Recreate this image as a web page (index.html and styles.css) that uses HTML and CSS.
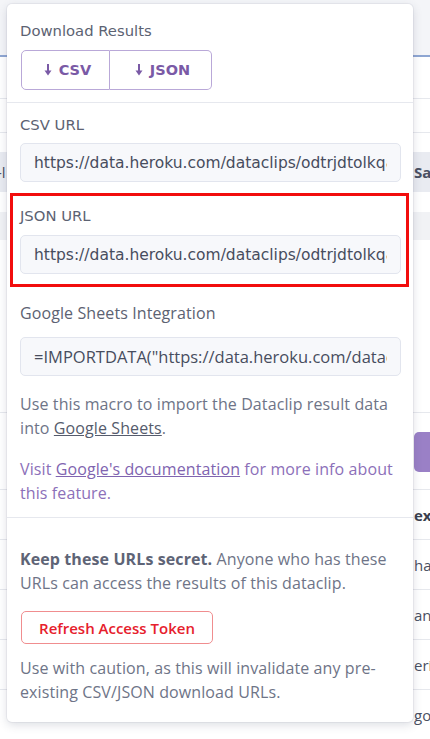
FILE: index.html
```html
<!DOCTYPE html>
<html>
<head>
<meta charset="utf-8">
<link rel="stylesheet" href="styles.css">
</head>
<body>
<div class="page">
  <div class="bg-top"></div>
  <div class="bg-blue"></div>
  <div class="bg-row bg-h41"></div>
  <div class="bg-row bg-h34"></div>
  <div class="bg-row bg-h20 noline"></div>
  <div class="bg-head"><span class="left-txt">-l</span><span class="right-txt bold">Sa</span></div>
  <div class="bg-gap"></div>
  <div class="bg-sub"></div>
  <div class="bg-row bg-h173"></div>
  <div class="bg-btnrow"><span class="purple-btn"></span></div>
  <div class="bg-trow"><span class="right-txt bold dark">ex</span></div>
  <div class="bg-trow"><span class="right-txt">ha</span></div>
  <div class="bg-trow"><span class="right-txt">an</span></div>
  <div class="bg-trow"><span class="right-txt">eri</span></div>
  <div class="bg-trow"><span class="right-txt">gol</span></div>
</div>

<div class="popover">
  <div class="block first">
    <div class="heading">Download Results</div>
    <div class="btn-group">
      <button class="dl-btn"><svg class="arrow" viewBox="0 0 8 12" width="8" height="12"><path d="M4 0v7" stroke="currentColor" stroke-width="2"/><path d="M0.5 6.5h7L4 11.5z" fill="currentColor"/></svg>CSV</button>
      <button class="dl-btn"><svg class="arrow" viewBox="0 0 8 12" width="8" height="12"><path d="M4 0v7" stroke="currentColor" stroke-width="2"/><path d="M0.5 6.5h7L4 11.5z" fill="currentColor"/></svg>JSON</button>
    </div>
  </div>
  <div class="divider"></div>
  <div class="block">
    <div class="field f-csv">
      <div class="heading">CSV URL</div>
      <div class="input"><span class="val">https://data.heroku.com/dataclips/odtrjdtolkqaqvgzlqwuvqbkfhxh.csv?access-token=abc</span></div>
    </div>
    <div class="field highlight">
      <div class="heading">JSON URL</div>
      <div class="input"><span class="val">https://data.heroku.com/dataclips/odtrjdtolkqaqvgzlqwuvqbkfhxh.json?access-token=abc</span></div>
    </div>
    <div class="field f-sheets">
      <div class="label">Google Sheets Integration</div>
      <div class="input body-font"><span class="val">=IMPORTDATA("https://data.heroku.com/dataclips/odtrjdtolkq.csv")</span></div>
    </div>
    <p class="text">Use this macro to import the Dataclip result data into <a class="ulink">Google Sheets</a>.</p>
    <p class="text purple">Visit <a class="ulink plink">Google's documentation</a> for more info about this feature.</p>
  </div>
  <div class="divider"></div>
  <div class="block last">
    <p class="text"><strong>Keep these URLs secret.</strong> Anyone who has these URLs can access the results of this dataclip.</p>
    <button class="danger-btn">Refresh Access Token</button>
    <p class="text">Use with caution, as this will invalidate any pre-existing CSV/JSON download URLs.</p>
  </div>
</div>
</body>
</html>
```

FILE: styles.css
```css
* { box-sizing: border-box; }
html, body { margin: 0; padding: 0; }
body {
  width: 430px;
  height: 739px;
  overflow: hidden;
  position: relative;
  background: #ffffff;
  font-family: "Open Sans", "Liberation Sans", sans-serif;
}

/* background page */
.page { display: flex; flex-direction: column; }
.bg-top { height: 55px; background: #f4f5f8; }
.bg-blue { height: 2px; background: #8ea6d2; }
.bg-row { border-bottom: 1px solid #e6e8ed; }
.bg-h41 { height: 42px; }
.bg-h34 { height: 34px; }
.bg-h20 { height: 19px; }
.noline { border-bottom: none; }
.bg-head {
  height: 40px;
  background: #e9ebf1;
  display: flex;
  align-items: center;
  justify-content: space-between;
  font-size: 15px;
  color: #4a5062;
}
.bg-gap { height: 20px; }
.bg-sub { height: 28px; background: #f1f2f5; }
.bg-h173 { height: 173px; }
.bg-btnrow { height: 77px; border-bottom: 1px solid #e6e8ed; display: flex; align-items: center; justify-content: flex-end; }
.purple-btn { width: 16px; height: 40px; background: #9a80c6; border-radius: 5px 0 0 5px; margin-top: 2px; }
.bg-trow {
  height: 50px;
  border-bottom: 1px solid #e6e8ed;
  display: flex;
  align-items: center;
  justify-content: flex-end;
  font-size: 15px;
  color: #4a5062;
}
.left-txt { margin-left: -3px; }
.right-txt { width: 16px; overflow: hidden; white-space: nowrap; }
.bold { font-weight: 700; }
.dark { color: #3a3f4e; }

/* popover */
.popover {
  position: absolute;
  left: 7px;
  top: 4px;
  width: 406px;
  height: 718px;
  background: #ffffff;
  border-radius: 5px;
  box-shadow: 0 0 0 1px rgba(60, 70, 100, 0.06), 0 3px 10px rgba(60, 70, 100, 0.18);
  display: flex;
  flex-direction: column;
}
.block { padding: 0 12px 0 13px; display: flex; flex-direction: column; }
.block.first { padding-top: 17px; padding-bottom: 12px; }
.divider { height: 1px; background: #e6e8ee; }

.heading {
  font-family: "DejaVu Sans", sans-serif;
  font-size: 14.8px;
  color: #5c6272;
  line-height: 20px;
}
.block.first .heading { margin-bottom: 9px; }

.btn-group { display: flex; width: 191px; height: 40px; margin-left: 1px; }
.dl-btn {
  flex: 1;
  display: flex;
  align-items: center;
  justify-content: center;
  gap: 7px;
  background: #ffffff;
  border: 1px solid #b9a8d8;
  font-family: "DejaVu Sans", sans-serif;
  font-weight: 700;
  font-size: 14.5px;
  color: #7a5aa6;
  padding: 0 0 0 4px;
}
.dl-btn:first-child { border-radius: 5px 0 0 5px; width: 89px; flex: none; }
.dl-btn:last-child { border-radius: 0 5px 5px 0; border-left: none; }
.arrow { display: block; }

.field { display: flex; flex-direction: column; padding-top: 13px; padding-bottom: 10px; }
.field.f-csv { padding-top: 12px; padding-bottom: 11px; }
.field .heading { margin-bottom: 8px; }
.field.highlight {
  border: 3px solid #f20d0d;
  margin: 0 -8px 0 -10px;
  padding: 10px 5px 10px 7px;
}
.field.highlight .heading { margin-bottom: 9px; }
.input {
  height: 39px;
  background: #f7f8fb;
  border: 1px solid #e2e5ee;
  border-radius: 5px;
  padding: 0 13px;
  display: flex;
  align-items: center;
  font-family: "DejaVu Sans", sans-serif;
  font-size: 15.5px;
  color: #474d5e;
}
.val { display: block; flex: 1; min-width: 0; white-space: nowrap; overflow: hidden; }
.input.body-font { font-family: "Open Sans", sans-serif; font-size: 16.5px; letter-spacing: 0; }
.label {
  font-size: 16px;
  letter-spacing: 0.1px;
  color: #5c6272;
  line-height: 20px;
  margin-bottom: 14px;
}
.field.f-sheets { padding-top: 16px; }

.text {
  margin: 0;
  font-size: 16px;
  letter-spacing: 0.1px;
  line-height: 24px;
  color: #6e7487;
}
.block .text + .text { margin-top: 17px; }
.field + .text { margin-top: 6px; }
.ulink { color: #555b6c; text-decoration: underline; }
.purple { color: #8c70b9; margin-bottom: 12px; }
.plink { color: #8064b0; }

.block.last { padding-top: 29px; }
strong { font-weight: 700; color: #5e6476; }
.danger-btn {
  align-self: flex-start;
  margin: 16px 0 12px 1px;
  width: 192px;
  height: 33px;
  background: #ffffff;
  border: 1px solid #f08d8f;
  border-radius: 5px;
  font-family: "Open Sans", sans-serif;
  font-weight: 600;
  font-size: 15px;
  color: #e6202c;
  padding: 0;
}
.block.last .text + .text { margin-top: 0; }
```
